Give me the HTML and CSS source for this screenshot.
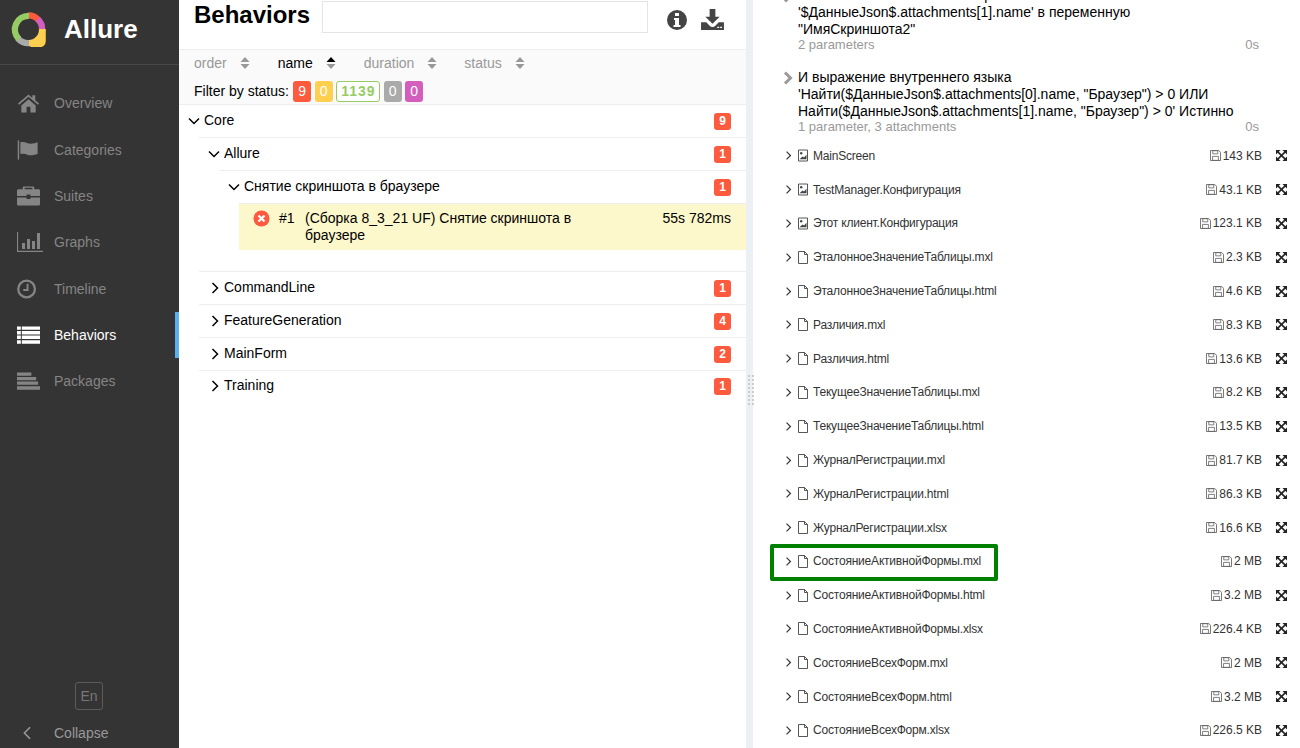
FILE: index.html
```html
<!DOCTYPE html>
<html lang="en">
<head>
    <meta charset="UTF-8">
    <title>Allure Report</title>
    <link rel="stylesheet" href="styles.css">
</head>
<body>
    <svg class="sprites" xmlns="http://www.w3.org/2000/svg">
        <symbol id="i-down" viewBox="0 0 14 14"><path d="M1 4.500l5 5 5-5" fill="none" stroke="currentColor" stroke-width="1.500"/></symbol>
        <symbol id="i-right" viewBox="0 0 14 14"><path d="M4.500 2l5 5-5 5" fill="none" stroke="currentColor" stroke-width="1.500"/></symbol>
        <symbol id="i-image" viewBox="0 0 12 12"><path d="M1.500.5h9v11h-9z" fill="none" stroke="currentColor" stroke-width=".9"/><circle cx="4.200" cy="3.800" r="1.200" fill="currentColor"/><path d="M2.500 9.800L5.500 7l1.500 1 2.500-2.800v4.600z" fill="currentColor"/></symbol>
        <symbol id="i-file" viewBox="0 0 12 13"><path d="M1.500.5h6l3 3v9h-9zM7.500.5v3h3" fill="none" stroke="currentColor" stroke-width=".9"/></symbol>
        <symbol id="i-save" viewBox="0 0 12 12"><path d="M.5.5h9l2 2v9H.5z" fill="none" stroke="currentColor"/><path d="M3 .8h5.500v3.400H3zM2.800 7h6.400v4.300H2.800z" fill="none" stroke="currentColor" stroke-width=".9"/></symbol>
        <symbol id="i-expand" viewBox="0 0 12 12"><path d="M2 2l8 8M10 2l-8 8" stroke="currentColor" stroke-width="1.700"/><path d="M0 0h5L0 5zM12 0v5L7 0zM0 12V7l5 5zM12 12H7l5-5z" fill="currentColor"/></symbol>
        <symbol id="i-sort" viewBox="0 0 10 14"><path d="M5 1l4.500 5H.5z" fill="var(--sort-up, #999)"/><path d="M5 13L.5 8h9z" fill="#999"/></symbol>
    </svg>

    <div class="app">
        <aside class="sidenav">
            <div class="brand">
                <svg class="brand-logo" viewBox="0 0 36 36" fill="none" stroke-width="6.500">
                    <path d="M18 3.500A14 14 0 0 1 28 7.800" stroke="#fd5a3e"/>
                    <path d="M27.500 7.300A14 14 0 0 1 32 18" stroke="#d35ebe"/>
                    <path d="M32 17.500A14 14 0 0 1 18 32" stroke="#ffd050"/>
                    <path d="M32.500 17.500V30a3 3 0 0 1-3 3H20" stroke="#ffd050"/>
                    <path d="M18.500 32A14 14 0 0 1 7 27" stroke="#aaaaaa"/>
                    <path d="M8 27.800A14 14 0 0 1 18.500 4" stroke="#97cc64"/>
                </svg>
                <span class="brand-name">Allure</span>
            </div>
            <nav class="menu">
                <a class="menu-item">
                    <svg class="menu-icon" viewBox="0 0 24 20"><path d="M12 1L1 10.500l1.200 1.300L12 3.500l9.800 8.300 1.200-1.300-4-3.400V2h-3v2.800zM4.500 12.500V20h5.500v-6h4v6h5.500v-7.500L12 6z" fill="currentColor"/></svg>
                    <span>Overview</span>
                </a>
                <a class="menu-item">
                    <svg class="menu-icon" viewBox="0 0 24 20"><path d="M1.500 0v20" stroke="currentColor" stroke-width="1.500"/><path d="M3.500 2c5-1.500 7 1.500 11 1.500 2.500 0 5-.7 7-1.500v12c-2 1-4.500 1.600-7 1.600-4 0-6-2.800-11-1.300z" fill="currentColor"/></svg>
                    <span>Categories</span>
                </a>
                <a class="menu-item">
                    <svg class="menu-icon" viewBox="0 0 24 20"><path d="M8 3V1.500h8V3h2V1a1 1 0 0 0-1-1H7a1 1 0 0 0-1 1v2zM0 4.500A1.500 1.500 0 0 1 1.500 3h21A1.500 1.500 0 0 1 24 4.500V10H14V8.500h-4V10H0zM0 11.500h10V13h4v-1.500h10v7a1.500 1.500 0 0 1-1.500 1.500h-21A1.500 1.500 0 0 1 0 18.500z" fill="currentColor"/></svg>
                    <span>Suites</span>
                </a>
                <a class="menu-item">
                    <svg class="menu-icon menu-icon-wide" viewBox="0 0 26 20"><path d="M.5 0v19.300H26" fill="none" stroke="currentColor" stroke-width="1.200"/><path d="M5 11h3v6H5zM10 7h3v10h-3zM15 9h3v8h-3zM20 1h3v16h-3z" fill="currentColor"/></svg>
                    <span>Graphs</span>
                </a>
                <a class="menu-item">
                    <svg class="menu-icon" viewBox="0 0 24 20"><circle cx="10" cy="10" r="8.700" fill="none" stroke="currentColor" stroke-width="2.400"/><path d="M11 4.500v6.500H6.500" fill="none" stroke="currentColor" stroke-width="2"/></svg>
                    <span>Timeline</span>
                </a>
                <a class="menu-item menu-item-active">
                    <svg class="menu-icon" viewBox="0 0 24 20"><path d="M0 1h4v3.600H0zM5 1h19v3.600H5zM0 5.800h4v3.600H0zM5 5.800h19v3.600H5zM0 10.600h4v3.600H0zM5 10.600h19v3.600H5zM0 15.400h4V19H0zM5 15.400h19V19H5z" fill="currentColor"/></svg>
                    <span>Behaviors</span>
                </a>
                <a class="menu-item">
                    <svg class="menu-icon" viewBox="0 0 24 20"><path d="M0 1h15v3.400H0zM0 5.700h20v3.400H0zM0 10.400h22v3.400H0zM0 15.600h24V19H0z" fill="currentColor"/></svg>
                    <span>Packages</span>
                </a>
            </nav>
            <div class="lang"><span class="lang-btn">En</span></div>
            <div class="collapse">
                <svg class="collapse-icon" viewBox="0 0 10 16"><path d="M8.500 1.500L2 8l6.500 6.500" fill="none" stroke="currentColor" stroke-width="1.800"/></svg>
                <span>Collapse</span>
            </div>
        </aside>

        <main class="tree-pane">
            <header class="pane-head">
                <h2 class="pane-title">Behaviors</h2>
                <input class="search" type="text">
                <svg class="head-icon head-info" viewBox="0 0 20 20"><path fill-rule="evenodd" d="M10 0a10 10 0 1 1 0 20a10 10 0 0 1 0-20zM8 3h4v3H8zM7 8h5v7h1.500v2h-7v-2H8v-5H7z" fill="currentColor"/></svg>
                <svg class="head-icon head-download" viewBox="0 0 24 22"><path d="M9 0h6v8h4.500L12 15.500 4.500 8H9zM0 14h5.500l3.500 3.500a4 4 0 0 0 6 0L18.500 14H24v8H0z" fill="currentColor"/><path d="M17 18.500h2v1.500h-2zM20 18.500h2v1.500h-2z" fill="#fff"/></svg>
            </header>
            <div class="controls">
                <div class="sorters">
                    <span class="sorter sorter-order">order <svg class="sort-icon"><use href="#i-sort"/></svg></span>
                    <span class="sorter sorter-name sorter-active">name <svg class="sort-icon"><use href="#i-sort"/></svg></span>
                    <span class="sorter sorter-duration">duration <svg class="sort-icon"><use href="#i-sort"/></svg></span>
                    <span class="sorter">status <svg class="sort-icon"><use href="#i-sort"/></svg></span>
                </div>
                <div class="filters">
                    <span class="filter-label">Filter by status:</span>
                    <span class="chip chip-failed">9</span>
                    <span class="chip chip-broken">0</span>
                    <span class="chip chip-passed">1139</span>
                    <span class="chip chip-skipped">0</span>
                    <span class="chip chip-unknown">0</span>
                </div>
            </div>
            <div class="tree">
                <div class="tree-row">
                    <svg class="chevron"><use href="#i-down"/></svg>
                    <span class="tree-name">Core</span>
                    <span class="count">9</span>
                </div>
                <div class="tree-group">
                    <div class="tree-row">
                        <svg class="chevron"><use href="#i-down"/></svg>
                        <span class="tree-name">Allure</span>
                        <span class="count">1</span>
                    </div>
                    <div class="tree-group">
                        <div class="tree-row">
                            <svg class="chevron"><use href="#i-down"/></svg>
                            <span class="tree-name">Снятие скриншота в браузере</span>
                            <span class="count">1</span>
                        </div>
                        <div class="tree-group tree-leaves">
                            <div class="leaf">
                                <svg class="leaf-status" viewBox="0 0 18 18"><circle cx="9" cy="9" r="8.500" fill="#fd5a3e"/><path d="M5.800 5.800l6.400 6.400M12.200 5.800l-6.400 6.400" stroke="#fff" stroke-width="2.400"/></svg>
                                <span class="leaf-order">#1</span>
                                <span class="leaf-name">(Сборка 8_3_21 UF) Снятие скриншота в браузере</span>
                                <span class="leaf-time">55s 782ms</span>
                            </div>
                        </div>
                    </div>
                    <div class="tree-row">
                        <svg class="chevron"><use href="#i-right"/></svg>
                        <span class="tree-name">CommandLine</span>
                        <span class="count">1</span>
                    </div>
                    <div class="tree-row">
                        <svg class="chevron"><use href="#i-right"/></svg>
                        <span class="tree-name">FeatureGeneration</span>
                        <span class="count">4</span>
                    </div>
                    <div class="tree-row">
                        <svg class="chevron"><use href="#i-right"/></svg>
                        <span class="tree-name">MainForm</span>
                        <span class="count">2</span>
                    </div>
                    <div class="tree-row">
                        <svg class="chevron"><use href="#i-right"/></svg>
                        <span class="tree-name">Training</span>
                        <span class="count">1</span>
                    </div>
                </div>
            </div>
        </main>

        <div class="splitter"><div class="grip"></div></div>

        <section class="detail-pane">
            <div class="step step-first">
                <svg class="step-caret" viewBox="0 0 10 14"><path d="M2 1.500L7.500 7 2 12.500" fill="none" stroke="currentColor" stroke-width="3"/></svg>
                <div class="step-body">
                    <div class="step-title">И Я запоминаю значение выражения<br>'$ДанныеJson$.attachments[1].name' в переменную<br>"ИмяСкриншота2"</div>
                    <div class="step-meta"><span>2 parameters</span><span>0s</span></div>
                </div>
            </div>
            <div class="step">
                <svg class="step-caret" viewBox="0 0 10 14"><path d="M2 1.500L7.500 7 2 12.500" fill="none" stroke="currentColor" stroke-width="3"/></svg>
                <div class="step-body">
                    <div class="step-title">И выражение внутреннего языка<br>'Найти($ДанныеJson$.attachments[0].name, "Браузер") &gt; 0 ИЛИ<br>Найти($ДанныеJson$.attachments[1].name, "Браузер") &gt; 0' Истинно</div>
                    <div class="step-meta"><span>1 parameter, 3 attachments</span><span>0s</span></div>
                </div>
            </div>
            <ul class="attachments">
                <li class="attachment"><svg class="att-chevron"><use href="#i-right"/></svg><svg class="att-type"><use href="#i-image"/></svg><span class="att-name">MainScreen</span><svg class="att-save"><use href="#i-save"/></svg><span>143 KB</span><svg class="att-expand"><use href="#i-expand"/></svg></li>
                <li class="attachment"><svg class="att-chevron"><use href="#i-right"/></svg><svg class="att-type"><use href="#i-image"/></svg><span class="att-name">TestManager.Конфигурация</span><svg class="att-save"><use href="#i-save"/></svg><span>43.1 KB</span><svg class="att-expand"><use href="#i-expand"/></svg></li>
                <li class="attachment"><svg class="att-chevron"><use href="#i-right"/></svg><svg class="att-type"><use href="#i-image"/></svg><span class="att-name">Этот клиент.Конфигурация</span><svg class="att-save"><use href="#i-save"/></svg><span>123.1 KB</span><svg class="att-expand"><use href="#i-expand"/></svg></li>
                <li class="attachment"><svg class="att-chevron"><use href="#i-right"/></svg><svg class="att-type"><use href="#i-file"/></svg><span class="att-name">ЭталонноеЗначениеТаблицы.mxl</span><svg class="att-save"><use href="#i-save"/></svg><span>2.3 KB</span><svg class="att-expand"><use href="#i-expand"/></svg></li>
                <li class="attachment"><svg class="att-chevron"><use href="#i-right"/></svg><svg class="att-type"><use href="#i-file"/></svg><span class="att-name">ЭталонноеЗначениеТаблицы.html</span><svg class="att-save"><use href="#i-save"/></svg><span>4.6 KB</span><svg class="att-expand"><use href="#i-expand"/></svg></li>
                <li class="attachment"><svg class="att-chevron"><use href="#i-right"/></svg><svg class="att-type"><use href="#i-file"/></svg><span class="att-name">Различия.mxl</span><svg class="att-save"><use href="#i-save"/></svg><span>8.3 KB</span><svg class="att-expand"><use href="#i-expand"/></svg></li>
                <li class="attachment"><svg class="att-chevron"><use href="#i-right"/></svg><svg class="att-type"><use href="#i-file"/></svg><span class="att-name">Различия.html</span><svg class="att-save"><use href="#i-save"/></svg><span>13.6 KB</span><svg class="att-expand"><use href="#i-expand"/></svg></li>
                <li class="attachment"><svg class="att-chevron"><use href="#i-right"/></svg><svg class="att-type"><use href="#i-file"/></svg><span class="att-name">ТекущееЗначениеТаблицы.mxl</span><svg class="att-save"><use href="#i-save"/></svg><span>8.2 KB</span><svg class="att-expand"><use href="#i-expand"/></svg></li>
                <li class="attachment"><svg class="att-chevron"><use href="#i-right"/></svg><svg class="att-type"><use href="#i-file"/></svg><span class="att-name">ТекущееЗначениеТаблицы.html</span><svg class="att-save"><use href="#i-save"/></svg><span>13.5 KB</span><svg class="att-expand"><use href="#i-expand"/></svg></li>
                <li class="attachment"><svg class="att-chevron"><use href="#i-right"/></svg><svg class="att-type"><use href="#i-file"/></svg><span class="att-name">ЖурналРегистрации.mxl</span><svg class="att-save"><use href="#i-save"/></svg><span>81.7 KB</span><svg class="att-expand"><use href="#i-expand"/></svg></li>
                <li class="attachment"><svg class="att-chevron"><use href="#i-right"/></svg><svg class="att-type"><use href="#i-file"/></svg><span class="att-name">ЖурналРегистрации.html</span><svg class="att-save"><use href="#i-save"/></svg><span>86.3 KB</span><svg class="att-expand"><use href="#i-expand"/></svg></li>
                <li class="attachment"><svg class="att-chevron"><use href="#i-right"/></svg><svg class="att-type"><use href="#i-file"/></svg><span class="att-name">ЖурналРегистрации.xlsx</span><svg class="att-save"><use href="#i-save"/></svg><span>16.6 KB</span><svg class="att-expand"><use href="#i-expand"/></svg></li>
                <li class="attachment attachment-marked"><svg class="att-chevron"><use href="#i-right"/></svg><svg class="att-type"><use href="#i-file"/></svg><span class="att-name">СостояниеАктивнойФормы.mxl</span><svg class="att-save"><use href="#i-save"/></svg><span>2 MB</span><svg class="att-expand"><use href="#i-expand"/></svg><div class="marker"></div></li>
                <li class="attachment"><svg class="att-chevron"><use href="#i-right"/></svg><svg class="att-type"><use href="#i-file"/></svg><span class="att-name">СостояниеАктивнойФормы.html</span><svg class="att-save"><use href="#i-save"/></svg><span>3.2 MB</span><svg class="att-expand"><use href="#i-expand"/></svg></li>
                <li class="attachment"><svg class="att-chevron"><use href="#i-right"/></svg><svg class="att-type"><use href="#i-file"/></svg><span class="att-name">СостояниеАктивнойФормы.xlsx</span><svg class="att-save"><use href="#i-save"/></svg><span>226.4 KB</span><svg class="att-expand"><use href="#i-expand"/></svg></li>
                <li class="attachment"><svg class="att-chevron"><use href="#i-right"/></svg><svg class="att-type"><use href="#i-file"/></svg><span class="att-name">СостояниеВсехФорм.mxl</span><svg class="att-save"><use href="#i-save"/></svg><span>2 MB</span><svg class="att-expand"><use href="#i-expand"/></svg></li>
                <li class="attachment"><svg class="att-chevron"><use href="#i-right"/></svg><svg class="att-type"><use href="#i-file"/></svg><span class="att-name">СостояниеВсехФорм.html</span><svg class="att-save"><use href="#i-save"/></svg><span>3.2 MB</span><svg class="att-expand"><use href="#i-expand"/></svg></li>
                <li class="attachment"><svg class="att-chevron"><use href="#i-right"/></svg><svg class="att-type"><use href="#i-file"/></svg><span class="att-name">СостояниеВсехФорм.xlsx</span><svg class="att-save"><use href="#i-save"/></svg><span>226.5 KB</span><svg class="att-expand"><use href="#i-expand"/></svg></li>
            </ul>
        </section>
    </div>
</body>
</html>
```

FILE: styles.css
```css
* {
    box-sizing: border-box;
}
html, body {
    height: 100%;
}
body {
    margin: 0;
    font-family: "Liberation Sans", Arial, sans-serif;
    font-size: 14px;
    color: #000;
    background-color: #fff;
    overflow: hidden;
}
.sprites {
    display: none;
}
.app {
    display: flex;
    height: 748px;
    overflow: hidden;
}

/* side menu */
.sidenav {
    width: 179px;
    flex: none;
    display: flex;
    flex-direction: column;
    background-color: #343434;
    color: #999;
}
.brand {
    height: 65px;
    flex: none;
    display: flex;
    align-items: center;
    padding: 0 0 6px 11px;
    border-bottom: 1px solid #484848;
}
.brand-logo {
    width: 35px;
    height: 35px;
    flex: none;
}
.brand-name {
    margin-left: 18px;
    font-size: 26px;
    font-weight: bold;
    color: #fff;
}
.menu {
    flex: 1;
    padding-top: 15.200px;
}
.menu-item {
    height: 46.300px;
    display: flex;
    align-items: center;
    padding-left: 17px;
    color: #858585;
    border-right: 4px solid transparent;
}
.menu-item-active {
    color: #fff;
    border-right-color: #5ab1ee;
}
.menu-icon {
    width: 23px;
    height: 20px;
    flex: none;
    margin-right: 14px;
}
.menu-icon-wide {
    width: 26px;
    margin-right: 11px;
}
.lang {
    padding-left: 75px;
}
.lang-btn {
    display: block;
    width: 28px;
    height: 28px;
    line-height: 26px;
    text-align: center;
    color: #777;
    border: 1px solid #5c5c5c;
    border-radius: 3px;
}
.collapse {
    height: 38px;
    display: flex;
    align-items: center;
    padding: 8px 0 0 22px;
    color: #999;
}
.collapse-icon {
    width: 10px;
    height: 14px;
    margin-right: 22px;
}

/* tree pane */
.tree-pane {
    width: 567px;
    flex: none;
}
.pane-head {
    height: 50px;
    display: flex;
    align-items: flex-start;
    padding: 1px 0 0 15px;
    border-bottom: 1px solid #eee;
}
.pane-title {
    margin: 0;
    width: 128px;
    font-size: 24px;
    line-height: 28px;
    font-weight: bold;
}
.search {
    width: 326px;
    height: 32px;
    padding: 0 8px;
    border: 1px solid #e4e4e4;
}
.head-icon {
    flex: none;
    color: #444;
}
.head-info {
    width: 20px;
    height: 20px;
    margin: 9px 0 0 19px;
}
.head-download {
    width: 23px;
    height: 21px;
    margin: 8px 0 0 14px;
}
.controls {
    height: 54px;
    padding: 0 15px;
    background-color: #fafafa;
}
.sorters {
    height: 26px;
    display: flex;
    align-items: center;
}
.sorter {
    display: flex;
    align-items: center;
    color: #999;
}
.sorter-order, .sorter-name {
    margin-right: 28px;
}
.sorter-duration {
    margin-right: 27px;
}
.sorter-active {
    color: #000;
    --sort-up: #000;
}
.sort-icon {
    width: 10px;
    height: 14px;
    margin-left: 13px;
}
.filters {
    height: 28px;
    margin-top: 1px;
    display: flex;
    align-items: center;
    gap: 3.500px;
}
.filter-label {
    margin-right: 1px;
}
.chip {
    min-width: 18px;
    height: 21px;
    padding: 0 4px;
    line-height: 21px;
    text-align: center;
    color: #fff;
    border-radius: 3px;
    letter-spacing: .5px;
}
.chip-failed {
    background-color: #fd5a3e;
}
.chip-broken {
    background-color: #ffd050;
}
.chip-passed {
    padding: 0 3px;
    width: 44px;
    color: #97cc64;
    font-weight: bold;
    line-height: 19px;
    border: 1px solid #97cc64;
    background-color: #fff;
    letter-spacing: 1px;
}
.chip-skipped {
    background-color: #aaa;
}
.chip-unknown {
    background-color: #d35ebe;
}
.tree-row {
    height: 33px;
    display: flex;
    align-items: center;
    padding: 0 15px 0 8px;
    border-top: 1px solid #eee;
}
.tree-row:last-child {
    padding-bottom: 2px;
}
.tree-group {
    margin-left: 20px;
}
.chevron {
    width: 16px;
    height: 14px;
    flex: none;
    margin-right: 1px;
}
.tree-name {
    flex: 1;
    padding-bottom: 2px;
}
.count {
    width: 17px;
    height: 17px;
    line-height: 17px;
    text-align: center;
    font-size: 12px;
    font-weight: bold;
    color: #fff;
    background-color: #fd5a3e;
    border-radius: 3px;
}
.tree-leaves {
    padding-bottom: 21px;
}
.leaf {
    height: 47px;
    display: flex;
    align-items: flex-start;
    padding: 6px 15px 0 14px;
    line-height: 17px;
    background-color: #fdf7cc;
    border-top: 1px solid #eee;
}
.leaf-status {
    width: 17px;
    height: 17px;
    flex: none;
}
.leaf-order {
    width: 26px;
    margin-left: 9px;
    flex: none;
}
.leaf-name {
    width: 285px;
}
.leaf-time {
    margin-left: auto;
}

/* splitter */
.splitter {
    width: 7px;
    flex: none;
    padding: 375px 1px 0 2px;
    background-color: #ecf0f4;
}
.grip {
    height: 32px;
    width: 6px;
    background: conic-gradient(#ccc 25%, transparent 0) -2px 0 / 4px 4px;
}

/* steps and attachments */
.detail-pane {
    flex: 1;
    min-width: 0;
    padding: 0 38px 0 30px;
    overflow: hidden;
}
.step {
    display: flex;
    margin-bottom: 15px;
}
.step-first {
    margin-top: -12.700px;
}
.step-caret {
    width: 10px;
    height: 14px;
    flex: none;
    margin: 2px 5px 0 0;
    color: #999;
}
.step-body {
    flex: 1;
    margin-right: 3px;
}
.step-title {
    line-height: 16.700px;
    white-space: nowrap;
}
.step-meta {
    display: flex;
    justify-content: space-between;
    font-size: 13px;
    line-height: 16.700px;
    color: #999;
}
.attachments {
    margin: -12px -25px 0 0;
    padding: 0;
    list-style: none;
}
.attachment {
    height: 33.800px;
    display: flex;
    align-items: center;
    gap: 3px;
    position: relative;
    font-size: 12px;
    color: #333;
}
.att-chevron {
    width: 11px;
    height: 11px;
    flex: none;
}
.att-type {
    width: 12px;
    height: 13px;
    margin-right: 1px;
    color: #444;
    flex: none;
}
.att-name {
    flex: 1;
    letter-spacing: -.2px;
}
.att-save {
    width: 11px;
    height: 11px;
    margin-right: -1px;
    color: #666;
    flex: none;
}
.att-expand {
    width: 11px;
    height: 11px;
    margin-left: 11px;
    flex: none;
    color: #222;
}
.marker {
    position: absolute;
    left: -13px;
    top: -1px;
    width: 228px;
    height: 37px;
    border: 4px solid #008000;
    border-radius: 2px;
}
```
